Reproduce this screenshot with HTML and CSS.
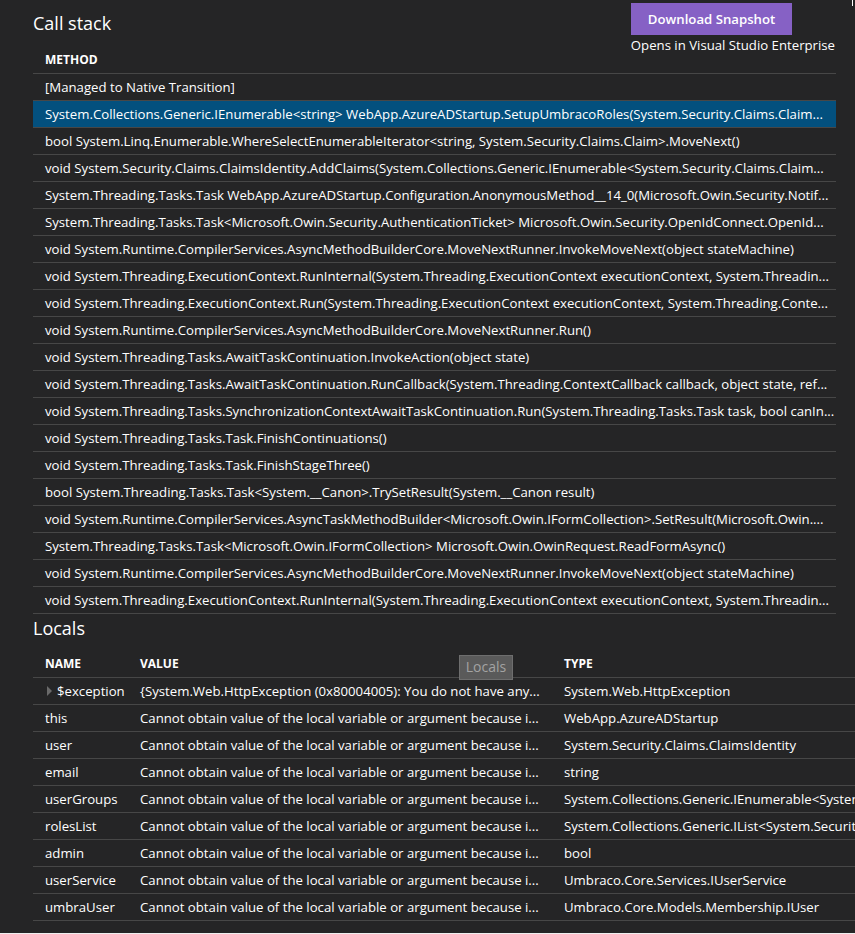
FILE: index.html
```html
<!DOCTYPE html>
<html lang="en">
<head>
<meta charset="utf-8">
<title>Call stack</title>
<link rel="stylesheet" href="styles.css">
</head>
<body>
<div class="page">
  <span class="caret-mark"></span>
  <header class="top">
    <h1 class="title">Call stack</h1>
    <div class="snapshot">
      <button class="btn" type="button">Download Snapshot</button>
      <div class="note">Opens in Visual Studio Enterprise</div>
    </div>
  </header>

  <div class="stack">
    <div class="row head">METHOD</div>
    <div class="row">[Managed to Native Transition]</div>
    <div class="row sel">System.Collections.Generic.IEnumerable&lt;string&gt; WebApp.AzureADStartup.SetupUmbracoRoles(System.Security.Claims.Claim...</div>
    <div class="row">bool System.Linq.Enumerable.WhereSelectEnumerableIterator&lt;string, System.Security.Claims.Claim&gt;.MoveNext()</div>
    <div class="row">void System.Security.Claims.ClaimsIdentity.AddClaims(System.Collections.Generic.IEnumerable&lt;System.Security.Claims.Claim...</div>
    <div class="row">System.Threading.Tasks.Task WebApp.AzureADStartup.Configuration.AnonymousMethod__14_0(Microsoft.Owin.Security.Notif...</div>
    <div class="row">System.Threading.Tasks.Task&lt;Microsoft.Owin.Security.AuthenticationTicket&gt; Microsoft.Owin.Security.OpenIdConnect.OpenId...</div>
    <div class="row">void System.Runtime.CompilerServices.AsyncMethodBuilderCore.MoveNextRunner.InvokeMoveNext(object stateMachine)</div>
    <div class="row">void System.Threading.ExecutionContext.RunInternal(System.Threading.ExecutionContext executionContext, System.Threadin...</div>
    <div class="row">void System.Threading.ExecutionContext.Run(System.Threading.ExecutionContext executionContext, System.Threading.Conte...</div>
    <div class="row">void System.Runtime.CompilerServices.AsyncMethodBuilderCore.MoveNextRunner.Run()</div>
    <div class="row">void System.Threading.Tasks.AwaitTaskContinuation.InvokeAction(object state)</div>
    <div class="row">void System.Threading.Tasks.AwaitTaskContinuation.RunCallback(System.Threading.ContextCallback callback, object state, ref...</div>
    <div class="row">void System.Threading.Tasks.SynchronizationContextAwaitTaskContinuation.Run(System.Threading.Tasks.Task task, bool canIn...</div>
    <div class="row">void System.Threading.Tasks.Task.FinishContinuations()</div>
    <div class="row">void System.Threading.Tasks.Task.FinishStageThree()</div>
    <div class="row">bool System.Threading.Tasks.Task&lt;System.__Canon&gt;.TrySetResult(System.__Canon result)</div>
    <div class="row">void System.Runtime.CompilerServices.AsyncTaskMethodBuilder&lt;Microsoft.Owin.IFormCollection&gt;.SetResult(Microsoft.Owin....</div>
    <div class="row">System.Threading.Tasks.Task&lt;Microsoft.Owin.IFormCollection&gt; Microsoft.Owin.OwinRequest.ReadFormAsync()</div>
    <div class="row">void System.Runtime.CompilerServices.AsyncMethodBuilderCore.MoveNextRunner.InvokeMoveNext(object stateMachine)</div>
    <div class="row">void System.Threading.ExecutionContext.RunInternal(System.Threading.ExecutionContext executionContext, System.Threadin...</div>
  </div>

  <section class="locals">
    <h2 class="title sub">Locals</h2>
    <div class="ltable">
      <div class="lrow head"><div class="c">NAME</div><div class="c">VALUE</div><div class="c">TYPE</div></div>
      <div class="lrow"><div class="c name"><span class="expander"></span>$exception</div><div class="c">{System.Web.HttpException (0x80004005): You do not have any...</div><div class="c">System.Web.HttpException</div></div>
      <div class="lrow"><div class="c">this</div><div class="c">Cannot obtain value of the local variable or argument because i...</div><div class="c">WebApp.AzureADStartup</div></div>
      <div class="lrow"><div class="c">user</div><div class="c">Cannot obtain value of the local variable or argument because i...</div><div class="c">System.Security.Claims.ClaimsIdentity</div></div>
      <div class="lrow"><div class="c">email</div><div class="c">Cannot obtain value of the local variable or argument because i...</div><div class="c">string</div></div>
      <div class="lrow"><div class="c">userGroups</div><div class="c">Cannot obtain value of the local variable or argument because i...</div><div class="c">System.Collections.Generic.IEnumerable&lt;System.Security.Claims.Claim&gt;</div></div>
      <div class="lrow"><div class="c">rolesList</div><div class="c">Cannot obtain value of the local variable or argument because i...</div><div class="c">System.Collections.Generic.IList&lt;System.Security.Claims.Claim&gt;</div></div>
      <div class="lrow"><div class="c">admin</div><div class="c">Cannot obtain value of the local variable or argument because i...</div><div class="c">bool</div></div>
      <div class="lrow"><div class="c">userService</div><div class="c">Cannot obtain value of the local variable or argument because i...</div><div class="c">Umbraco.Core.Services.IUserService</div></div>
      <div class="lrow"><div class="c">umbraUser</div><div class="c">Cannot obtain value of the local variable or argument because i...</div><div class="c">Umbraco.Core.Models.Membership.IUser</div></div>
    </div>
    <div class="ghost">Locals</div>
  </section>
</div>
</body>
</html>
```

FILE: styles.css
```css
html, body {
  margin: 0;
  padding: 0;
  background: #efefef;
  overflow: hidden;
}

.page {
  position: relative;
  box-sizing: border-box;
  width: 855px;
  height: 933px;
  padding: 0 19px 0 33px;
  overflow: hidden;
  background: #252526;
  color: #ffffff;
  font-family: "Open Sans", "Noto Sans", "Liberation Sans", sans-serif;
  font-size: 13.2px;
}

.caret-mark {
  position: absolute;
  top: 0;
  right: 2px;
  width: 1px;
  height: 6px;
  background: #ffffff;
}

.top {
  display: flex;
  justify-content: space-between;
  align-items: flex-start;
  height: 47px;
}

.title {
  margin: 11px 0 0;
  font-size: 18px;
  font-weight: 400;
  line-height: 24px;
}

.title.sub {
  margin: 2px 0 11px;
}

.snapshot {
  display: flex;
  flex-direction: column;
  align-items: flex-start;
  margin-top: 3px;
  margin-right: 1px;
}

.btn {
  height: 32px;
  padding: 0 17px;
  border: 0;
  background: #8661c5;
  color: #ffffff;
  font-family: inherit;
  font-size: 13.2px;
  font-weight: 600;
}

.note {
  margin-top: 1px;
  font-size: 13.2px;
  line-height: 18px;
}

.row {
  height: 26px;
  line-height: 26px;
  padding: 0 0 0 12px;
  border-bottom: 1px solid #474747;
  white-space: nowrap;
  overflow: hidden;
  text-overflow: ellipsis;
}

.row.head,
.lrow.head {
  font-size: 12px;
  font-weight: 700;
}

.row.sel {
  background: #03507e;
}

.locals {
  position: relative;
}

.ltable {
  width: 900px;
}

.lrow {
  display: grid;
  grid-template-columns: 95px 424px 1fr;
  height: 26px;
  line-height: 26px;
  border-bottom: 1px solid #474747;
}

.lrow .c {
  padding-left: 12px;
  white-space: nowrap;
  overflow: hidden;
  text-overflow: ellipsis;
}

.lrow:not(.head) .c:last-child {
  text-overflow: clip;
}

.lrow .c.name {
  display: flex;
  align-items: center;
  padding-left: 14px;
}

.expander {
  width: 0;
  height: 0;
  margin-right: 5px;
  border-left: 5px solid #6a6a6a;
  border-top: 5px solid transparent;
  border-bottom: 5px solid transparent;
}

.ghost {
  position: absolute;
  left: 426px;
  top: 39px;
  box-sizing: border-box;
  width: 54px;
  height: 25px;
  border: 1px solid #6e6e6e;
  background: #5a5a5a;
  color: #a3a3a3;
  font-size: 14px;
  line-height: 22px;
  text-align: center;
}
```
